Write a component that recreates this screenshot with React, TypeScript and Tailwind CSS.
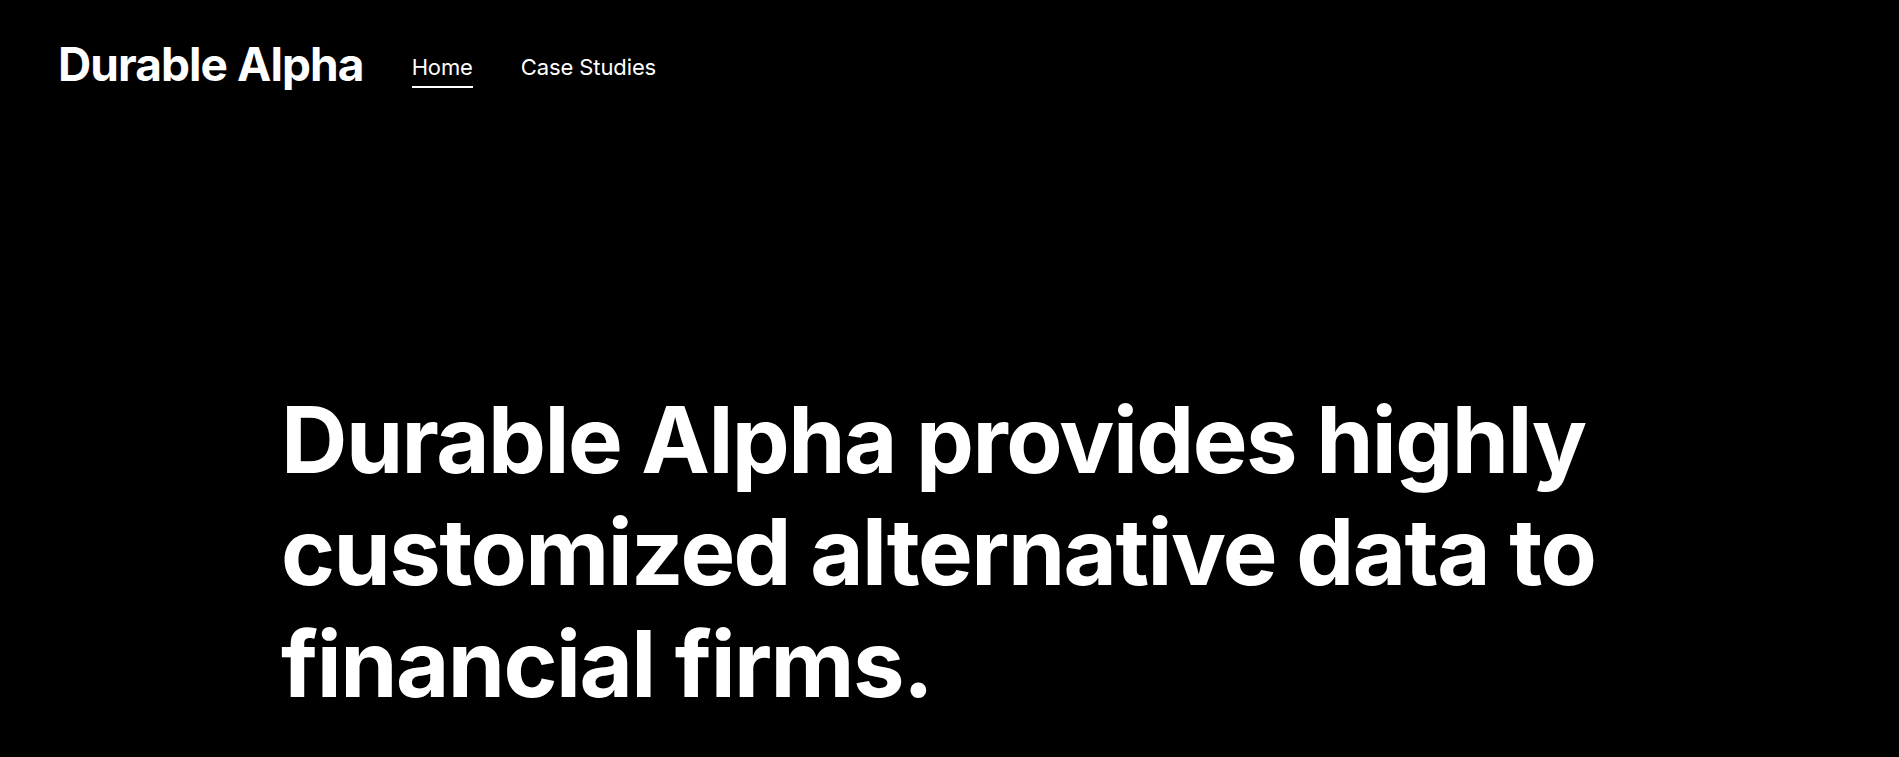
export default function App() {
  return (
    <div className="min-h-screen bg-black text-white font-['Inter',sans-serif]">
      <header className="flex items-center gap-[48px] px-[58px] pt-[40px]">
        <a href="#" className="text-[46px] font-bold tracking-[-0.02em] leading-none">
          Durable Alpha
        </a>
        <nav className="flex items-center gap-[48px] text-[22px] tracking-[-0.005em]">
          <a href="#" className="border-b-2 border-white pt-[11px] pb-[2px]">Home</a>
          <a href="#" className="border-b-2 border-transparent pt-[11px] pb-[2px]">Case Studies</a>
        </nav>
      </header>
      <main className="pl-[281px] pt-[296px]">
        <h1 className="max-w-[1400px] text-[92px] font-bold leading-[112px] tracking-[-0.017em]">
          Durable Alpha provides highly customized alternative data to financial firms.
        </h1>
      </main>
    </div>
  );
}
